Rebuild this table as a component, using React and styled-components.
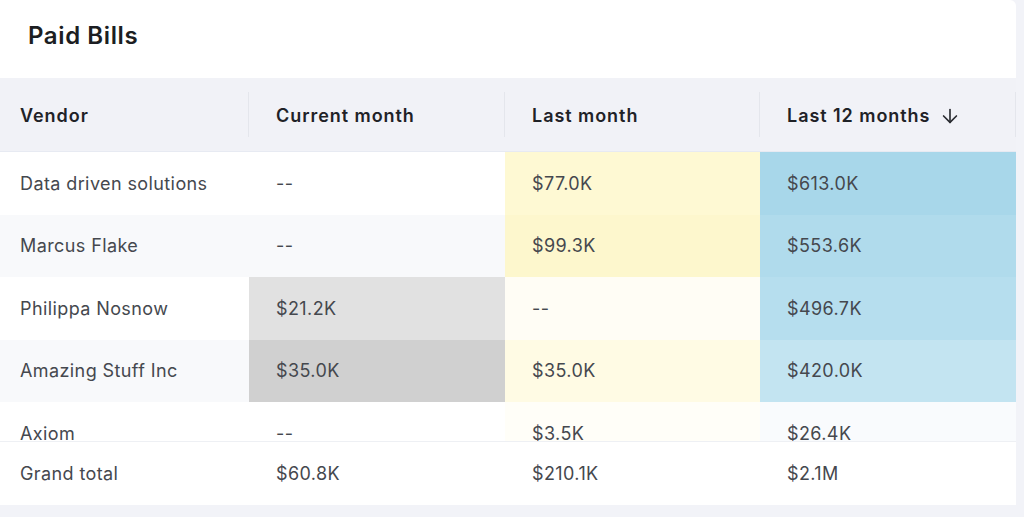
import React from "react";
import styled, { createGlobalStyle } from "styled-components";
import { ArrowDown } from "lucide-react";

const GlobalStyle = createGlobalStyle`
  html, body {
    margin: 0;
    padding: 0;
    background: #f2f3f8;
    font-family: Inter, "Noto Sans", sans-serif;
    -webkit-font-smoothing: antialiased;
  }
`;

const Page = styled.div`
  width: 1024px;
  height: 517px;
  overflow: hidden;
  background: #f2f3f8;
`;

const Card = styled.div`
  width: 1016px;
  background: #fff;
  border-top-right-radius: 6px;
`;

const Title = styled.div`
  height: 78px;
  padding: 0 28px 8px;
  display: flex;
  align-items: center;
  font-size: 24px;
  font-weight: 600;
  color: #1c1e22;
  letter-spacing: 0.6px;
  box-sizing: border-box;
`;

const cols = "249px 256px 255px 256px";

const HeadRow = styled.div`
  display: grid;
  grid-template-columns: ${cols};
  height: 74px;
  background: #f1f2f7;
  border-bottom: 1px solid #e7eaf2;
  box-sizing: border-box;
`;

const HeadCell = styled.div`
  display: flex;
  align-items: center;
  gap: 9px;
  padding-left: ${({ first }) => (first ? "20px" : "27px")};
  padding-top: 2px;
  font-size: 18px;
  font-weight: 600;
  letter-spacing: 0.95px;
  color: #1f2227;
  position: relative;
  &::after {
    content: "";
    position: absolute;
    right: 0;
    top: 14px;
    bottom: 14px;
    width: 1px;
    background: #e4e6ec;
  }
`;

const Body = styled.div`
  height: 289px;
  overflow: hidden;
`;

const Row = styled.div`
  display: grid;
  grid-template-columns: ${cols};
  height: 62.5px;
`;

const Cell = styled.div`
  display: flex;
  align-items: center;
  padding-left: ${({ first }) => (first ? "20px" : "27px")};
  font-size: 18px;
  color: #45484e;
  background: ${({ bg }) => bg || "transparent"};
  letter-spacing: 0.4px;
`;

const Footer = styled.div`
  display: grid;
  grid-template-columns: ${cols};
  height: 64px;
  border-top: 1px solid #eef0f4;
  box-sizing: border-box;
  background: #fff;
`;

const rows = [
  {
    vendor: "Data driven solutions",
    cells: [
      ["--", null],
      ["$77.0K", "#fef9d3"],
      ["$613.0K", "#a8d7ea"],
    ],
  },
  {
    vendor: "Marcus Flake",
    cells: [
      ["--", null],
      ["$99.3K", "#fdf7cd"],
      ["$553.6K", "#b0dbec"],
    ],
  },
  {
    vendor: "Philippa Nosnow",
    cells: [
      ["$21.2K", "#e1e1e1"],
      ["--", "#fffdf5"],
      ["$496.7K", "#b6deee"],
    ],
  },
  {
    vendor: "Amazing Stuff Inc",
    cells: [
      ["$35.0K", "#d0d0d0"],
      ["$35.0K", "#fffbe4"],
      ["$420.0K", "#c3e4f1"],
    ],
  },
  {
    vendor: "Axiom",
    cells: [
      ["--", null],
      ["$3.5K", "#fffef8"],
      ["$26.4K", "#f9fbfd"],
    ],
  },
];

export default function App() {
  return (
    <Page>
      <GlobalStyle />
      <Card>
        <Title>Paid Bills</Title>
        <HeadRow>
          <HeadCell first>Vendor</HeadCell>
          <HeadCell>Current month</HeadCell>
          <HeadCell>Last month</HeadCell>
          <HeadCell>
            Last 12 months
            <ArrowDown size={22} strokeWidth={1.8} color="#2a2c31" />
          </HeadCell>
        </HeadRow>
        <Body>
          {rows.map((r, i) => (
            <Row key={r.vendor}>
              <Cell first bg={i % 2 === 1 ? "#f8f9fb" : "#fff"}>
                {r.vendor}
              </Cell>
              {r.cells.map(([v, bg], j) => (
                <Cell key={j} bg={bg || (i % 2 === 1 ? "#f8f9fb" : "#fff")}>
                  {v}
                </Cell>
              ))}
            </Row>
          ))}
        </Body>
        <Footer>
          <Cell first>Grand total</Cell>
          <Cell>$60.8K</Cell>
          <Cell>$210.1K</Cell>
          <Cell>$2.1M</Cell>
        </Footer>
      </Card>
    </Page>
  );
}
